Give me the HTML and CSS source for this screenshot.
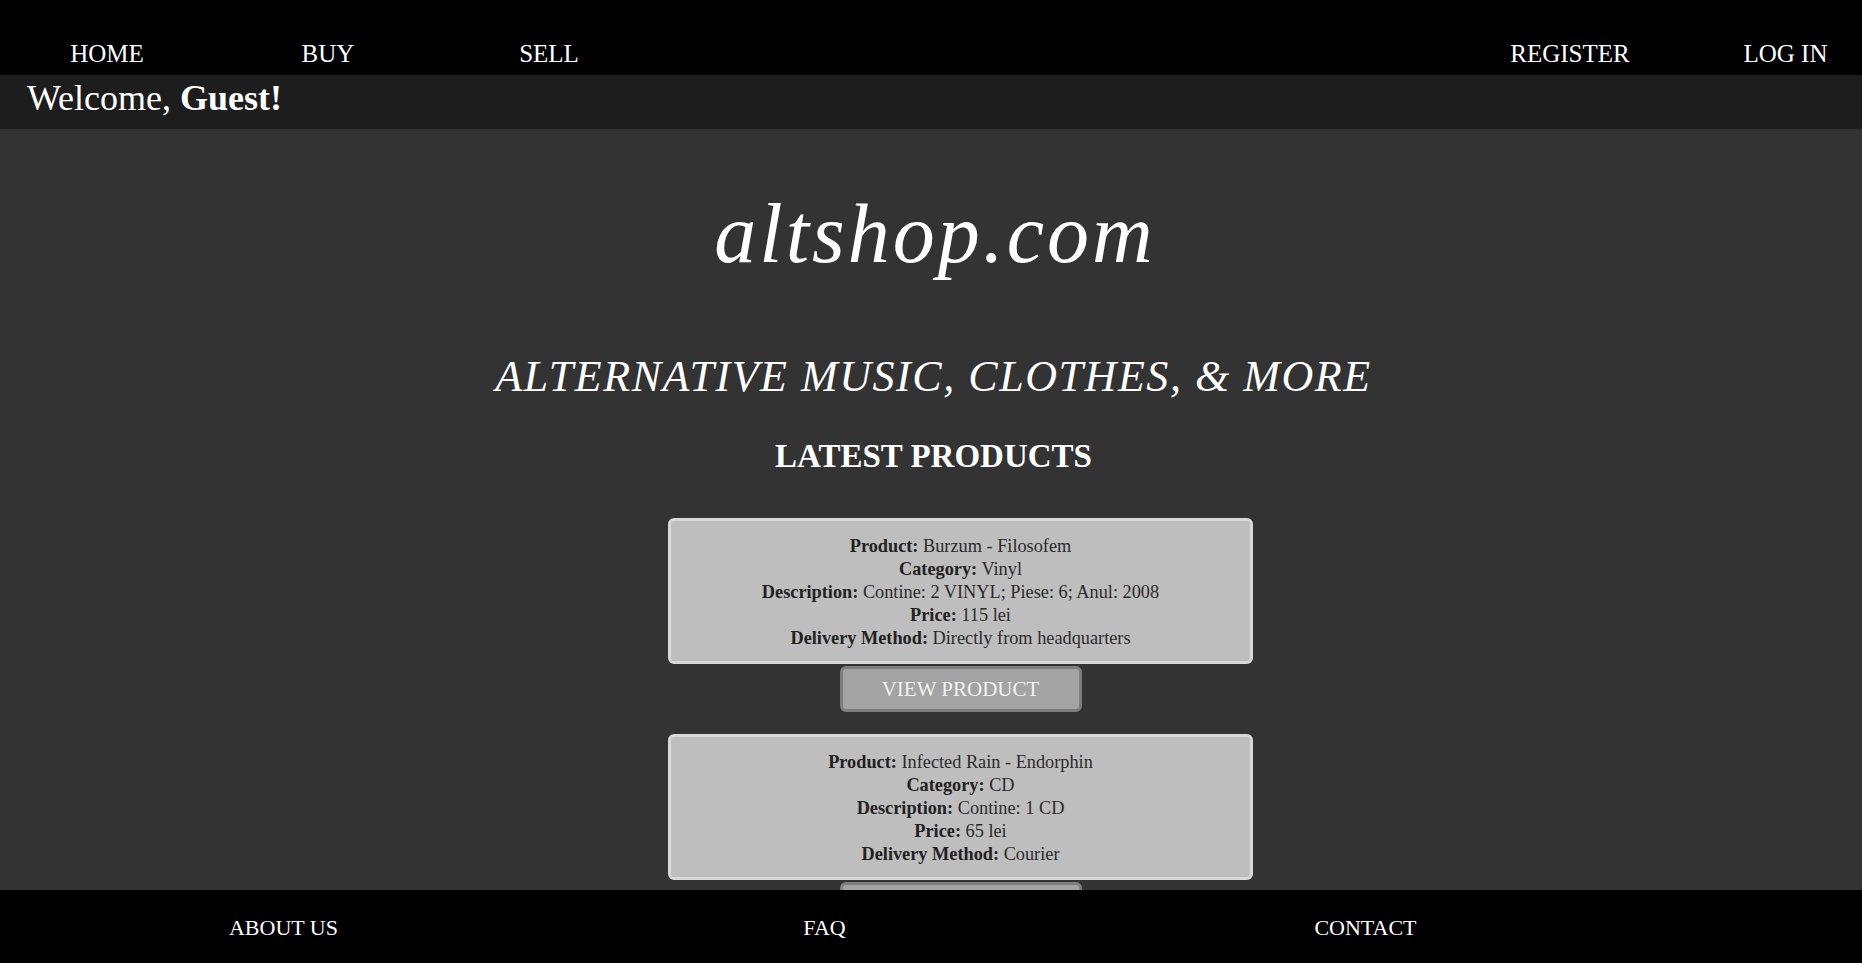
FILE: index.html
```html
<!DOCTYPE html>
<html lang="en">
<head>
<meta charset="utf-8">
<title>altshop.com</title>
<link rel="stylesheet" href="styles.css">
</head>
<body>
<header class="topnav">
  <ul class="nav-left">
    <li><a href="#">HOME</a></li>
    <li><a href="#">BUY</a></li>
    <li><a href="#">SELL</a></li>
  </ul>
  <ul class="nav-right">
    <li><a href="#">REGISTER</a></li>
    <li><a href="#">LOG IN</a></li>
  </ul>
</header>
<div class="welcome">Welcome, <b>Guest!</b></div>
<main class="main">
  <h1 class="title">altshop.com</h1>
  <h2 class="subtitle">ALTERNATIVE MUSIC, CLOTHES, &amp; MORE</h2>
  <h3 class="latest">LATEST PRODUCTS</h3>
  <section class="products">
    <div class="product">
      <div class="card">
        <div><b>Product:</b> Burzum - Filosofem</div>
        <div><b>Category:</b> Vinyl</div>
        <div><b>Description:</b> Contine: 2 VINYL; Piese: 6; Anul: 2008</div>
        <div><b>Price:</b> 115 lei</div>
        <div><b>Delivery Method:</b> Directly from headquarters</div>
      </div>
      <button class="view">VIEW PRODUCT</button>
    </div>
    <div class="product">
      <div class="card">
        <div><b>Product:</b> Infected Rain - Endorphin</div>
        <div><b>Category:</b> CD</div>
        <div><b>Description:</b> Contine: 1 CD</div>
        <div><b>Price:</b> 65 lei</div>
        <div><b>Delivery Method:</b> Courier</div>
      </div>
      <button class="view">VIEW PRODUCT</button>
    </div>
  </section>
</main>
<footer class="footer">
  <a href="#">ABOUT US</a>
  <a href="#">FAQ</a>
  <a href="#">CONTACT</a>
</footer>
</body>
</html>
```
FILE: styles.css
```css
* { box-sizing: border-box; }
html, body {
  margin: 0;
  padding: 0;
}
body {
  background: #333333;
  color: #ffffff;
  font-family: "Liberation Serif", "Times New Roman", serif;
  height: 963px;
  overflow: hidden;
}
a { color: #ffffff; text-decoration: none; }

.topnav {
  background: #000000;
  height: 75px;
  display: flex;
  justify-content: space-between;
}
.topnav ul {
  list-style: none;
  margin: 0;
  padding: 41px 0 0 0;
  display: grid;
  font-size: 25px;
  line-height: 25px;
}
.nav-left {
  grid-template-columns: repeat(3, 214px);
  column-gap: 7px;
}
.nav-right {
  grid-template-columns: repeat(2, 153px);
  column-gap: 62.5px;
}
.topnav li { text-align: center; }

.welcome {
  background: #1d1d1d;
  height: 54px;
  padding: 0 0 8px 27px;
  font-size: 36px;
  line-height: 46px;
}

.main {
  display: flex;
  flex-direction: column;
  align-items: center;
  padding-left: 5px;
}
.title {
  margin: 60px 0 0 0;
  font-size: 84px;
  line-height: 90px;
  font-style: italic;
  font-weight: normal;
  letter-spacing: 3px;
  text-indent: 3px;
}
.subtitle {
  margin: 71px 0 0 0;
  font-size: 44px;
  line-height: 54px;
  font-style: italic;
  font-weight: normal;
  letter-spacing: 1.55px;
}
.latest {
  margin: 32px 0 0 0;
  font-size: 33px;
  line-height: 40px;
  font-weight: bold;
}

.products {
  align-self: stretch;
  padding-left: 54px;
  margin-top: 42px;
  display: flex;
  flex-direction: column;
  align-items: center;
  gap: 22px;
}
.product {
  display: flex;
  flex-direction: column;
  align-items: center;
  gap: 2px;
}
.card {
  width: 585px;
  height: 146px;
  background: #bebebe;
  border: 3px solid #d8d8d8;
  border-radius: 6px;
  padding: 14px 0 0 0;
  text-align: center;
  color: #2b2b2b;
  font-size: 18.3px;
  line-height: 23px;
}
.card b { color: #222222; }
.view {
  width: 242px;
  height: 46px;
  background: #a3a3a3;
  border: 3px solid #7e7e7e;
  border-radius: 6px;
  color: #f2f2f2;
  font-family: "Liberation Serif", "Times New Roman", serif;
  font-size: 21px;
  padding: 0;
}

.footer {
  position: fixed;
  left: 0;
  right: 0;
  bottom: 0;
  height: 73px;
  background: #000000;
  display: grid;
  grid-template-columns: repeat(3, 541px);
  padding: 27px 0 0 13px;
  font-size: 22px;
  line-height: 22px;
}
.footer a { text-align: center; }
```
